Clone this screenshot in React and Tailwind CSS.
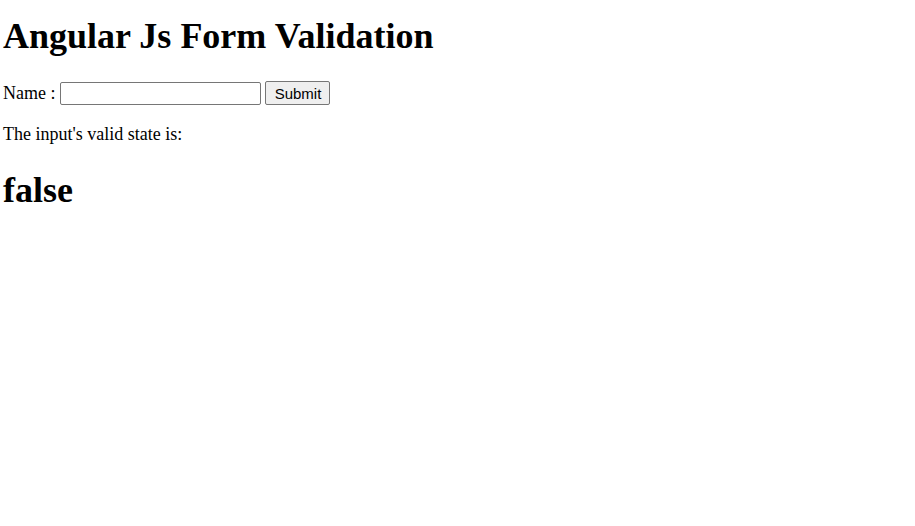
import React, { useState } from 'react';

const App = () => {
  const [name, setName] = useState('');
  const valid = name.trim().length > 0;

  return (
    <div className="min-h-screen bg-white px-[3px] text-black font-['Liberation_Serif','Times_New_Roman',serif] text-[18px]">
      <h1 className="pt-[16px] text-[36px] font-bold leading-[41px]">Angular Js Form Validation</h1>

      <form className="mt-[24px] flex h-[24px] items-center" onSubmit={(e) => e.preventDefault()}>
        <label htmlFor="name" className="leading-[21px]">Name :</label>
        <input
          id="name"
          value={name}
          onChange={(e) => setName(e.target.value)}
          required
          className="ml-[5px] h-[23px] w-[201px] rounded-[2px] border border-[#767676] px-[2px] text-[14px] outline-none"
        />
        <button
          type="submit"
          className="ml-[4px] h-[24px] w-[65px] rounded-[2px] border border-[#767676] bg-[#efefef] text-center font-['Liberation_Sans',Arial,sans-serif] text-[15px] leading-none"
        >
          Submit
        </button>
      </form>

      <p className="mt-[19px] leading-[21px]">The input's valid state is:</p>

      <h2 className="mt-[25px] text-[36px] font-bold leading-[41px]">{valid ? 'true' : 'false'}</h2>
    </div>
  );
};

export default App;
